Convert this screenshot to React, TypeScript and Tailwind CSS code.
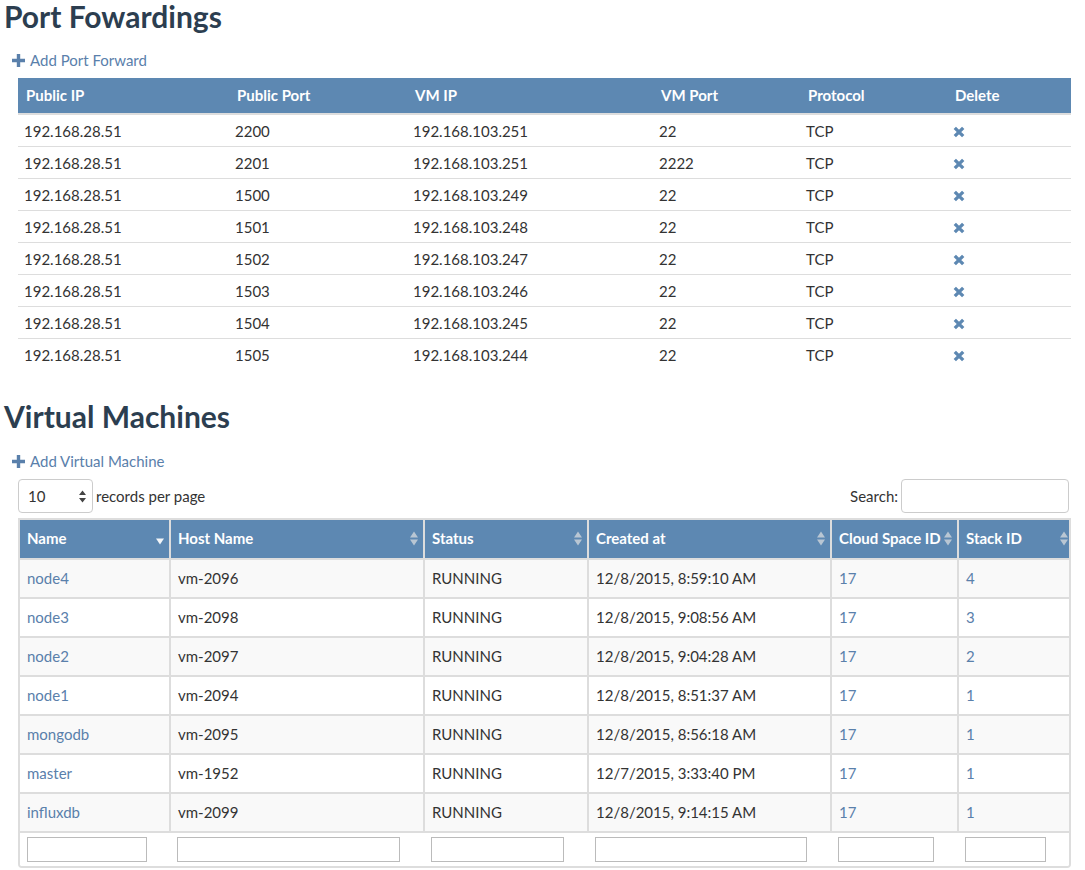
import React from "react";

// Port forward rows: public port, vm ip, vm port
const ports: [string, string, string][] = [
  ["2200", "192.168.103.251", "22"],
  ["2201", "192.168.103.251", "2222"],
  ["1500", "192.168.103.249", "22"],
  ["1501", "192.168.103.248", "22"],
  ["1502", "192.168.103.247", "22"],
  ["1503", "192.168.103.246", "22"],
  ["1504", "192.168.103.245", "22"],
  ["1505", "192.168.103.244", "22"],
];

const machines = [
  { name: "node4", host: "vm-2096", created: "12/8/2015, 8:59:10 AM", stack: "4" },
  { name: "node3", host: "vm-2098", created: "12/8/2015, 9:08:56 AM", stack: "3" },
  { name: "node2", host: "vm-2097", created: "12/8/2015, 9:04:28 AM", stack: "2" },
  { name: "node1", host: "vm-2094", created: "12/8/2015, 8:51:37 AM", stack: "1" },
  { name: "mongodb", host: "vm-2095", created: "12/8/2015, 8:56:18 AM", stack: "1" },
  { name: "master", host: "vm-1952", created: "12/7/2015, 3:33:40 PM", stack: "1" },
  { name: "influxdb", host: "vm-2099", created: "12/8/2015, 9:14:15 AM", stack: "1" },
];

const PlusIcon = () => (
  <svg width="13" height="13" viewBox="0 0 13 13" className="shrink-0">
    <path d="M4.8 0h3.4v4.8H13v3.4H8.2V13H4.8V8.2H0V4.8h4.8z" fill="currentColor" />
  </svg>
);

const RemoveIcon = () => (
  <svg width="12" height="12" viewBox="0 0 12 12" className="text-[#5d88b2]">
    <path d="M1.8 1.8l8.4 8.4M10.2 1.8l-8.4 8.4" stroke="currentColor" strokeWidth="3.3" />
  </svg>
);

const SortBoth = () => (
  <svg width="8" height="15" viewBox="0 0 8 15" className="shrink-0 text-[#b9c6d3]">
    <path d="M4 0.5L8 6.5H0z M4 14.5L0 8.5h8z" fill="currentColor" />
  </svg>
);

const SortDesc = () => (
  <svg width="8" height="15" viewBox="0 0 8 15" className="shrink-0 text-[#f2f5f8]">
    <path d="M4 13.5L0 7.5h8z" fill="currentColor" />
  </svg>
);

const AddLink = ({ label, className }: { label: string; className: string }) => (
  <a className={`ml-[8px] flex w-max items-center gap-[5px] leading-[20px] text-[#5a80ab] ${className}`}>
    <PlusIcon />
    {label}
  </a>
);

const vmCols = [
  { label: "Name", w: "w-[150px]", input: "w-[120px]" },
  { label: "Host Name", w: "w-[254px]", input: "w-[223px]" },
  { label: "Status", w: "w-[164px]", input: "w-[133px]" },
  { label: "Created at", w: "w-[243px]", input: "w-[212px]" },
  { label: "Cloud Space ID", w: "w-[127px]", input: "w-[96px]" },
  { label: "Stack ID", w: "w-[115px]", input: "w-[81px]" },
];

export default function App() {
  return (
    <div className="min-h-screen bg-white pl-[4px] font-['Lato',sans-serif] text-[15px] text-[#333]">
      <h1 className="text-[30px] font-bold leading-[33px] text-[#2c3e50]">Port Fowardings</h1>
      <AddLink label="Add Port Forward" className="mt-[17px]" />

      <table className="ml-[14px] mt-[8px] w-[1053px] table-fixed border-collapse">
        <thead>
          <tr className="bg-[#5d88b2] text-left text-white">
            <th className="w-[211px] border-b-2 border-[#ddd] px-[8px] py-[7px] leading-[21px]">Public IP</th>
            <th className="w-[178px] border-b-2 border-[#ddd] px-[8px] py-[7px] leading-[21px]">Public Port</th>
            <th className="w-[246px] border-b-2 border-[#ddd] px-[8px] py-[7px] leading-[21px]">VM IP</th>
            <th className="w-[147px] border-b-2 border-[#ddd] px-[8px] py-[7px] leading-[21px]">VM Port</th>
            <th className="w-[147px] border-b-2 border-[#ddd] px-[8px] py-[7px] leading-[21px]">Protocol</th>
            <th className="w-[124px] border-b-2 border-[#ddd] px-[8px] py-[7px] leading-[21px]">Delete</th>
          </tr>
        </thead>
        <tbody>
          {ports.map(([pp, ip, vp], i) => (
            <tr key={pp} className={i > 0 ? "border-t border-[#ddd]" : ""}>
              <td className="px-[6px] pb-[5px] pt-[7px] leading-[19px]">192.168.28.51</td>
              <td className="px-[6px] pb-[5px] pt-[7px] leading-[19px]">{pp}</td>
              <td className="px-[6px] pb-[5px] pt-[7px] leading-[19px]">{ip}</td>
              <td className="px-[6px] pb-[5px] pt-[7px] leading-[19px]">{vp}</td>
              <td className="px-[6px] pb-[5px] pt-[7px] leading-[19px]">TCP</td>
              <td className="px-[6px] pb-[5px] pt-[7px] leading-[19px]">
                <RemoveIcon />
              </td>
            </tr>
          ))}
        </tbody>
      </table>

      <h1 className="mt-[30px] text-[30px] font-bold leading-[33px] text-[#2c3e50]">Virtual Machines</h1>
      <AddLink label="Add Virtual Machine" className="mt-[18px]" />

      <div className="ml-[14px] mt-[8px] flex h-[34px] w-[1053px] items-center justify-between">
        <div className="flex items-center">
          <div className="flex h-[34px] w-[75px] items-center justify-between rounded-[4px] border border-[#ccc] bg-white pl-[9px] pr-[6px]">
            <span>10</span>
            <svg width="7" height="13" viewBox="0 0 7 13" className="text-[#444]">
              <path d="M3.5 0.5L7 5H0z M3.5 12.5L0 8h7z" fill="currentColor" />
            </svg>
          </div>
          <span className="ml-[3px]">records per page</span>
        </div>
        <div className="mr-[2px] flex items-center">
          <span>Search:</span>
          <input className="ml-[3px] h-[34px] w-[168px] rounded-[4px] border border-[#ccc] px-[8px] outline-none" />
        </div>
      </div>

      <div className="ml-[14px] mt-[5px] w-[1053px] overflow-hidden rounded-b-[4px] border-2 border-[#ddd]">
        <table className="w-full table-fixed border-collapse">
          <thead>
            <tr className="bg-[#5d88b2] text-left text-white">
              {vmCols.map((c, i) => (
                <th
                  key={c.label}
                  className={`${c.w} border-b-2 border-[#ddd] pb-[10px] pl-[7px] pr-[5px] pt-[8px] leading-[20px] ${i > 0 ? "border-l-2" : ""}`}
                >
                  <div className="flex items-center justify-between">
                    <span className="whitespace-nowrap">{c.label}</span>
                    {i === 0 ? <SortDesc /> : <SortBoth />}
                  </div>
                </th>
              ))}
            </tr>
          </thead>
          <tbody>
            {machines.map((m, i) => (
              <tr key={m.name} className={i % 2 === 0 ? "bg-[#f9f9f9]" : "bg-white"}>
                <td className="border-t-2 border-[#ddd] px-[7px] py-[8px] leading-[21px] text-[#5a80ab]">{m.name}</td>
                <td className="border-l-2 border-t-2 border-[#ddd] px-[7px] py-[8px] leading-[21px]">{m.host}</td>
                <td className="border-l-2 border-t-2 border-[#ddd] px-[7px] py-[8px] leading-[21px]">RUNNING</td>
                <td className="border-l-2 border-t-2 border-[#ddd] px-[7px] py-[8px] leading-[21px]">{m.created}</td>
                <td className="border-l-2 border-t-2 border-[#ddd] px-[7px] py-[8px] leading-[21px] text-[#5a80ab]">17</td>
                <td className="border-l-2 border-t-2 border-[#ddd] px-[7px] py-[8px] leading-[21px] text-[#5a80ab]">{m.stack}</td>
              </tr>
            ))}
            <tr className="bg-white">
              {vmCols.map((c) => (
                <td key={c.label} className="border-t-2 border-[#ddd] px-[7px] pb-[4px] pt-[4px]">
                  <input className={`${c.input} block h-[25px] border border-[#bbb] outline-none`} />
                </td>
              ))}
            </tr>
          </tbody>
        </table>
      </div>
    </div>
  );
}
